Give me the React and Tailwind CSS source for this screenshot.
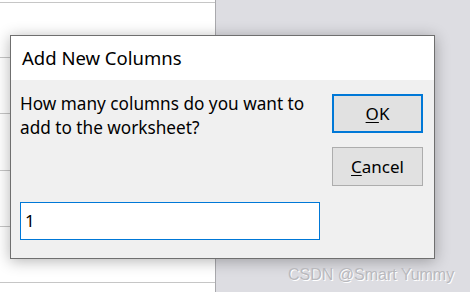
export default function App() {
  const font = { fontFamily: '"Noto Sans", "Open Sans", sans-serif' }
  return (
    <div className="relative w-[470px] h-[292px] overflow-hidden flex bg-[#dddde2]" style={font}>
      {/* sheet behind */}
      <div className="w-[216px] h-full bg-white border-r border-[#a9a9ad] flex flex-col">
        <div className="h-[3px] border-b border-[#c6c6c6]" />
        <div className="h-[55px] border-b border-[#c6c6c6]" />
        <div className="h-[56px] border-b border-[#c6c6c6]" />
        <div className="h-[57px] border-b border-[#c6c6c6]" />
        <div className="h-[56px] border-b border-[#c6c6c6]" />
        <div className="h-[56px] border-b border-[#c6c6c6]" />
      </div>

      {/* dialog */}
      <div className="absolute left-[10px] top-[35px] w-[425px] h-[224px] border border-[#6f6f6f] bg-[#f0f0f0] shadow-[0_2px_14px_rgba(0,0,0,0.3)] flex flex-col">
        <div className="h-[44px] bg-white flex items-center pl-[11px] text-[18.5px] text-black">
          Add New Columns
        </div>
        <div className="flex-1 flex">
          <div className="w-[321px] shrink-0 flex flex-col pl-[9px]">
            <p className="mt-[12px] text-[17.2px] leading-[24px] text-black whitespace-nowrap">
              How many columns do you want to
              <br />
              add to the worksheet?
            </p>
            <div className="mt-[62px] w-[300px] h-[38px] bg-white border border-[#0078d7] flex items-center pl-[4px] text-[17px] text-black">
              1
            </div>
          </div>
          <div className="flex-1 flex flex-col pt-[14px]">
            <button className="w-[91px] h-[39px] bg-[#e1e1e1] border-2 border-[#0078d7] text-[17px] text-black">
              <span className="underline underline-offset-2">O</span>K
            </button>
            <button className="mt-[14px] w-[91px] h-[39px] bg-[#e1e1e1] border border-[#adadad] text-[17px] text-black">
              <span className="underline underline-offset-2">C</span>ancel
            </button>
          </div>
        </div>
      </div>

      {/* watermark */}
      <div
        className="absolute left-[288px] top-[263px] text-[16px] text-[#b9b9bd] [text-shadow:1px_1px_0_#ffffff]"
        style={{ fontFamily: '"Liberation Sans", Arial, sans-serif' }}
      >
        CSDN @Smart Yummy
      </div>
    </div>
  )
}
